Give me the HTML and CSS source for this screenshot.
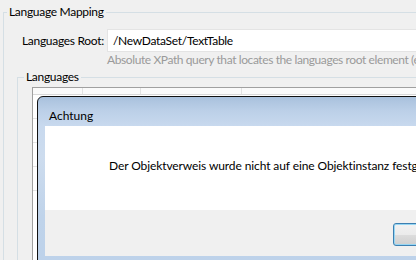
FILE: index.html
```html
<!DOCTYPE html>
<html>
<head>
<meta charset="utf-8">
<link rel="stylesheet" href="styles.css">
</head>
<body>
<div class="page">
  <fieldset class="group outer">
    <legend class="legend outer-legend">Language Mapping</legend>
    <div class="field-row">
      <label class="field-label">Languages Root:</label>
      <div class="field-col">
        <div class="textbox">/NewDataSet/TextTable</div>
        <div class="hint">Absolute XPath query that locates the languages root element (e.g. /root/languages)</div>
      </div>
    </div>
    <fieldset class="group inner">
      <legend class="legend inner-legend">Languages</legend>
      <div class="grid">
        <div class="grid-head">
          <span class="col c1"></span><span class="col c2"></span><span class="col c3"></span>
        </div>
        <div class="grid-row"></div>
        <div class="grid-row"></div>
        <div class="grid-row"></div>
        <div class="grid-row"></div>
      </div>
    </fieldset>
  </fieldset>

  <div class="dialog">
    <div class="titlebar">
      <span class="title">Achtung</span>
      <span class="tbtn">
        <svg width="12" height="6" viewBox="0 0 12 6"><path d="M0 6 L6 0 L12 6 Z" fill="#000"/></svg>
      </span>
    </div>
    <div class="client">
      <div class="message">Der Objektverweis wurde nicht auf eine Objektinstanz festgelegt.</div>
      <div class="buttons"><button class="ok">OK</button></div>
    </div>
  </div>
</div>
</body>
</html>
```

FILE: styles.css
```css
html, body {
  margin: 0;
  padding: 0;
}
body {
  background: #f0f0f0;
  font-family: Lato, "Open Sans", "Liberation Sans", sans-serif;
  font-size: 12px;
  line-height: 16px;
  color: #000;
}
.page {
  width: 416px;
  height: 260px;
  overflow: hidden;
  position: relative;
}
.group {
  border: 1px solid #d5dfe5;
  margin: 0;
  min-width: 0;
  letter-spacing: -0.3px;
}
.outer {
  margin: 4px 0 0 3px;
  padding: 9px 0 0 0;
  width: 600px;
  height: 400px;
}
.legend {
  padding: 0 2px;
  line-height: 16px;
}
.outer-legend {
  margin-left: 3px;
}
.field-row {
  display: flex;
}
.field-label {
  width: 103px;
  box-sizing: border-box;
  padding: 4px 0 0 18px;
  flex: none;
  white-space: nowrap;
}
.field-col {
  display: flex;
  flex-direction: column;
}
.textbox {
  height: 21px;
  width: 460px;
  border: 1px solid #e4e4e4;
  background: #fff;
  padding: 0 5px;
  line-height: 21px;
  white-space: nowrap;
}
.hint {
  color: #9a9a9a;
  white-space: nowrap;
  letter-spacing: -0.4px;
}
.inner {
  margin: 1px 0 0 13px;
  padding: 2px 0 0 14px;
  width: 560px;
  height: 300px;
}
.inner-legend {
  margin-left: -8px;
}
.grid {
  border: 1px solid #a0a0a0;
  background: #fff;
  height: 200px;
}
.grid-head {
  display: flex;
  height: 6px;
  border-bottom: 1px solid #d8d8d8;
  background: #fafafa;
}
.col {
  border-right: 1px solid #e2e2e2;
}
.c1 { width: 49px; }
.c2 { width: 57px; }
.c3 { width: 100px; }
.grid-row {
  height: 23px;
  border-bottom: 1px solid #e4e4e4;
}

.dialog {
  position: absolute;
  left: 37px;
  top: 96px;
  width: 404px;
  border: 1px solid #111;
  border-radius: 6px 0 0 0;
  padding: 0 7px 7px 7px;
  background: linear-gradient(#a9c1dd 0, #bcd0e8 14px, #c8d9ee 29px, #cddcee 60px, #bfd3ea 120px, #bcd1ea 200px);
}
.titlebar {
  height: 29px;
  display: flex;
  align-items: flex-start;
}
.title {
  padding: 11px 0 0 4px;
  line-height: 16px;
}
.tbtn {
  margin-left: auto;
  margin-right: -14px;
  margin-top: 5px;
  width: 36px;
  height: 14px;
  border: 1px solid #7b8798;
  border-radius: 3px;
  background: linear-gradient(#f3f6fa, #dfe6ee 50%, #cfd8e3 51%, #dde4ec);
  display: flex;
  justify-content: flex-start;
  align-items: center;
  padding-left: 9px;
  box-sizing: border-box;
}
.tbtn svg {
  display: block;
}
.client {
  background: #fff;
}
.message {
  height: 52px;
  padding: 32px 0 0 64px;
  white-space: nowrap;
  letter-spacing: -0.1px;
}
.buttons {
  background: #f0f0f0;
  height: 46px;
  padding: 13px 0 0 348px;
  box-sizing: border-box;
}
.ok {
  display: block;
  width: 75px;
  height: 23px;
  border: 1px solid #3c7fb1;
  border-radius: 3px;
  box-shadow: inset 0 0 0 1px #97d6f3;
  background: linear-gradient(#f2f2f2 0, #ebebeb 50%, #dddddd 51%, #cfcfcf 100%);
  font-family: inherit;
  font-size: 12px;
  padding: 0;
}
```
